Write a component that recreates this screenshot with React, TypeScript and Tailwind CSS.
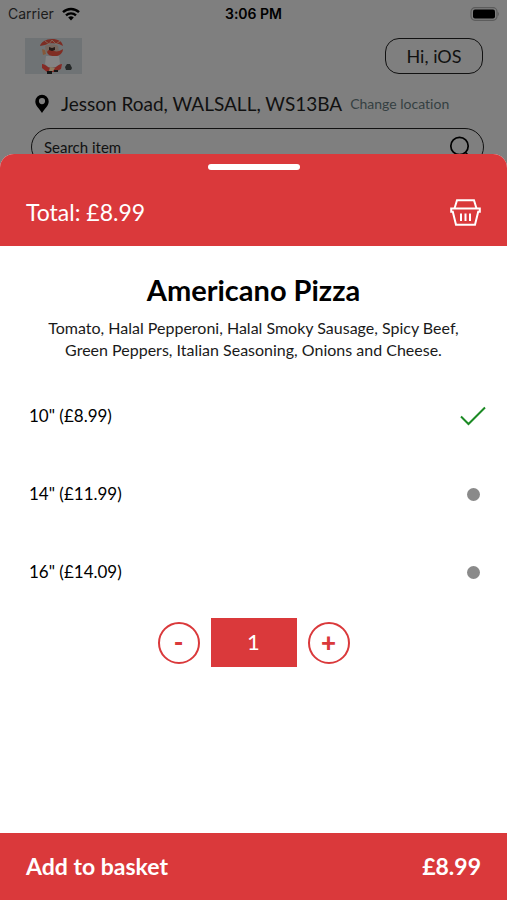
import { useState } from "react";

const SIZES = [
  { id: "10", label: '10" (£8.99)', price: 8.99 },
  { id: "14", label: '14" (£11.99)', price: 11.99 },
  { id: "16", label: '16" (£14.09)', price: 14.09 },
];

function StatusBar() {
  return (
    <div className="grid h-7 grid-cols-3 items-center px-2 font-[Inter,sans-serif] text-sm text-[#1c1c1c]">
      <div className="flex items-center gap-2">
        <span>Carrier</span>
        <svg className="h-[14px] w-[18px]" viewBox="0 0 18 14" fill="none" aria-label="Wi-Fi">
          <path d="M1 5.2a11.5 11.5 0 0 1 16 0" stroke="#000" strokeWidth="2.4" />
          <path d="M4 8.3a7.2 7.2 0 0 1 10 0" stroke="#000" strokeWidth="2.3" />
          <path d="M6.2 10.6a4.1 4.1 0 0 1 5.6 0L9 13.6z" fill="#000" />
        </svg>
      </div>
      <span className="text-center font-semibold text-black">3:06 PM</span>
      <svg className="h-[14px] w-[30px] justify-self-end" viewBox="0 0 30 14" fill="none" aria-label="Battery full">
        <rect x="2" y="0.7" width="26" height="12.6" rx="4" stroke="#5c5c5c" strokeWidth="1.2" />
        <rect x="4" y="2.6" width="22" height="8.8" rx="2" fill="#000" />
        <path d="M28.8 5v4c1.4-.6 1.4-3.4 0-4z" fill="#5c5c5c" />
      </svg>
    </div>
  );
}

function Logo() {
  return (
    <svg className="h-9 w-[57px]" viewBox="0 0 57 36" aria-label="Restaurant logo">
      <rect width="57" height="36" fill="#6f7375" />
      <path d="M15 8c1-4 6-7 12-7s10 2 11 7l-4-2c-5-1-10-1-14 1z" fill="#7c2d24" />
      <path d="M20 3l4 3 3-4 4 4 4-3" stroke="#86705f" strokeWidth="0.8" fill="none" />
      <path d="M20 8c4-2 10-2 13 0l1 6c-4 3-9 3-13 0z" fill="#76665d" />
      <path d="M17 11l3 1 1 4-3 1z" fill="#85583a" />
      <path d="M22 14c2-3 5-3 7-1 3 1 6 0 9-2 0 4-4 8-9 7-4 0-6-1-7-4z" fill="#802d23" />
      <path d="M24 9l3 1 3-1v3l-3 1-3-1z" fill="#251b18" />
      <path d="M21 18l13 0 1 8-4 3h-8l-3-3z" fill="#858485" />
      <path d="M17 26c4 0 5 4 10 4s6-4 10-4l-1 5-6 3h-8l-5-4z" fill="#862a25" />
      <path d="M25 29l5 1-2 3h-4z" fill="#8c7b62" />
      <path d="M22 33h5v3h-5zM29 32h4v2h-4z" fill="#161616" />
      <path d="M40 29l2-3h3l2 4-1 2h-5z" fill="#252929" />
    </svg>
  );
}

function PinIcon() {
  return (
    <svg className="h-5 w-[14px]" viewBox="0 0 14 20" aria-hidden="true">
      <path
        fillRule="evenodd"
        d="M7 .8A6.7 6.7 0 0 0 .3 7.5C.3 12 4.500 14.500 7 19c2.500-4.500 6.700-7 6.700-11.500A6.700 6.700 0 0 0 7 .8zM7 4a3.100 3.100 0 1 1 0 6.200A3.100 3.100 0 0 1 7 4z"
        fill="#000"
      />
    </svg>
  );
}

function BasketIcon() {
  return (
    <svg className="h-[27px] w-[31px]" viewBox="0 0 31 27" fill="none" stroke="#fff" strokeWidth="2" aria-hidden="true">
      <path d="M4.500 9.500L7 1.300h17L26.500 9.500" />
      <path d="M1.200 9.600h28.600v3.200h-1.600L25 25.800H6L2.800 12.800H1.200z" />
      <path d="M11 14.500v7.500M15.500 14.500v7.500M20 14.500v7.500" />
    </svg>
  );
}

function PageHeader() {
  return (
    <header>
      <StatusBar />
      <div className="flex items-start justify-between pt-[10px] pr-6 pl-[25px]">
        <Logo />
        <button className="h-9 w-[98px] rounded-[14px] border border-[#111] text-lg leading-none text-[#111]">
          Hi, iOS
        </button>
      </div>
      <div className="flex h-[54px] items-center pt-[6px] pl-[35px] text-[#111]">
        <PinIcon />
        <span className="ml-3 text-[19px] whitespace-nowrap">Jesson Road, WALSALL, WS13BA</span>
        <a href="#location" className="ml-2 text-sm whitespace-nowrap text-[#353f42]">
          Change location
        </a>
      </div>
      <div className="mr-[23px] ml-[31px] flex h-[38px] items-center rounded-full border border-[#111] px-3">
        <input
          type="search"
          aria-label="Search item"
          placeholder="Search item"
          className="min-w-0 flex-1 bg-transparent text-[15px] text-black outline-none placeholder:text-[#111]"
        />
        <svg className="size-[22px]" viewBox="0 0 22 22" fill="none" stroke="#000" strokeWidth="1.7" aria-hidden="true">
          <circle cx="10.5" cy="10" r="8.7" />
          <path d="M16.5 16.5l4.500 4.500" />
        </svg>
      </div>
    </header>
  );
}

export default function App() {
  const [size, setSize] = useState(SIZES[0]);
  const [quantity, setQuantity] = useState(1);
  const total = `£${(size.price * quantity).toFixed(2)}`;

  return (
    <div className="flex min-h-screen flex-col bg-[#7f7f7f] font-[Lato,sans-serif] [font-variant-ligatures:none]">
      <PageHeader />
      <main className="relative -mt-3 flex flex-1 flex-col overflow-hidden rounded-t-[14px] bg-white">
        <div className="bg-[#da393b] text-white">
          <div className="mx-auto h-4 w-[92px] pt-[10px]">
            <div className="h-[6px] rounded-full bg-white" />
          </div>
          <div className="flex h-[76px] items-center justify-between px-[26px] pt-2">
            <span className="text-[23px]">Total: {total}</span>
            <button aria-label="View basket">
              <BasketIcon />
            </button>
          </div>
        </div>

        <div className="px-7 pt-7 text-center">
          <h1 className="text-[29px] leading-8 font-bold text-black">Americano Pizza</h1>
          <p className="mt-[11px] text-base leading-[22px] text-[#1a1a1a]">
            Tomato, Halal Pepperoni, Halal Smoky Sausage, Spicy Beef,
            <br />
            Green Peppers, Italian Seasoning, Onions and Cheese.
          </p>
        </div>

        <fieldset className="mt-4" aria-label="Size">
          {SIZES.map((option) => (
            <label key={option.id} className="flex h-[78px] cursor-pointer items-center justify-between pr-5 pl-[29px] text-[17px] text-black">
              <span>{option.label}</span>
              <span className="flex w-7 items-center justify-center">
                <input
                  type="radio"
                  name="size"
                  checked={size.id === option.id}
                  onChange={() => setSize(option)}
                  className="peer size-[13px] appearance-none rounded-full bg-[#8a8a8a] checked:size-0"
                />
                <svg className="hidden h-5 w-7 peer-checked:block" viewBox="0 0 28 20" fill="none" aria-hidden="true">
                  <path d="M2 10.500l7.500 7.500L26 1.500" stroke="#1b8a24" strokeWidth="2" />
                </svg>
              </span>
            </label>
          ))}
        </fieldset>

        <div className="mt-[7px] flex items-center justify-center gap-[11px] text-[#da393b]">
          <button
            aria-label="Decrease quantity"
            onClick={() => setQuantity(Math.max(1, quantity - 1))}
            className="flex size-[42px] items-center justify-center rounded-full border-2 border-[#da393b] pb-[2px] text-[26px] leading-none font-black"
          >
            -
          </button>
          <output className="flex h-[49px] w-[86px] items-center justify-center bg-[#da393b] pb-[2px] text-[22px] text-white">
            {quantity}
          </output>
          <button
            aria-label="Increase quantity"
            onClick={() => setQuantity(quantity + 1)}
            className="flex size-[42px] items-center justify-center rounded-full border-2 border-[#da393b] pb-[2px] text-[26px] leading-none font-black"
          >
            +
          </button>
        </div>

        <button className="mt-auto flex h-[67px] w-full items-center justify-between bg-[#da393b] px-[26px] text-[23px] font-bold text-white">
          <span>Add to basket</span>
          <span>{total}</span>
        </button>
      </main>
    </div>
  );
}
